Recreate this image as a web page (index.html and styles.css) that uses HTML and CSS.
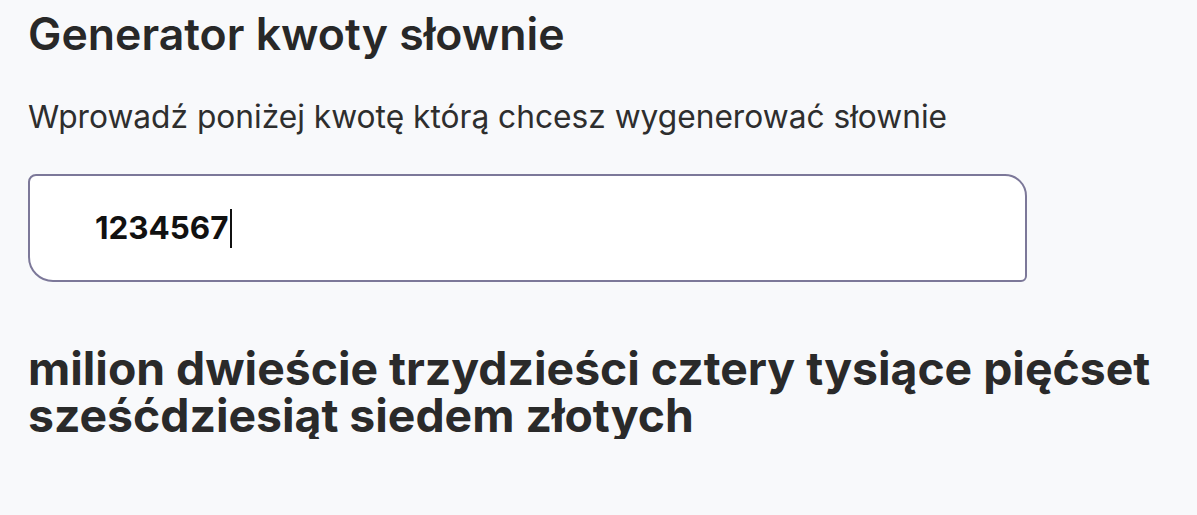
FILE: index.html
```html
<!DOCTYPE html>
<html lang="pl">
<head>
<meta charset="utf-8">
<link rel="stylesheet" href="styles.css">
</head>
<body>
<main class="page">
  <h1 class="title">Generator kwoty słownie</h1>
  <p class="lead">Wprowadź poniżej kwotę którą chcesz wygenerować słownie</p>
  <div class="field"><span class="value">1234567</span><span class="caret"></span></div>
  <p class="result">milion dwieście trzydzieści cztery tysiące pięćset sześćdziesiąt siedem złotych</p>
</main>
</body>
</html>
```
FILE: styles.css
```css
html, body {
  margin: 0;
  background: #f8f9fb;
}
.page {
  font-family: Inter, "Noto Sans", sans-serif;
  color: #272727;
  padding: 8px 28px 0 28px;
}
.title {
  margin: 0;
  font-size: 44.6px;
  font-weight: 600;
  line-height: 52px;
  color: #282828;
}
.lead {
  margin: 36px 0 0 0;
  font-size: 31.7px;
  line-height: 41px;
  font-weight: 400;
  color: #2e2e2e;
}
.field {
  margin-top: 37px;
  box-sizing: border-box;
  width: 999px;
  height: 108px;
  background: #fff;
  border: 2px solid #7c7899;
  border-radius: 8px 22px 6px 25px;
  display: flex;
  align-items: center;
  padding-left: 65px;
}
.value {
  font-size: 31.4px;
  font-weight: 700;
  color: #111;
  line-height: 38px;
}
.caret {
  width: 2px;
  height: 39px;
  background: #111;
  margin-left: 1px;
}
.result {
  margin: 63px 0 0 0;
  font-size: 46.3px;
  font-weight: 700;
  line-height: 47px;
  color: #2a2a2a;
}
```
